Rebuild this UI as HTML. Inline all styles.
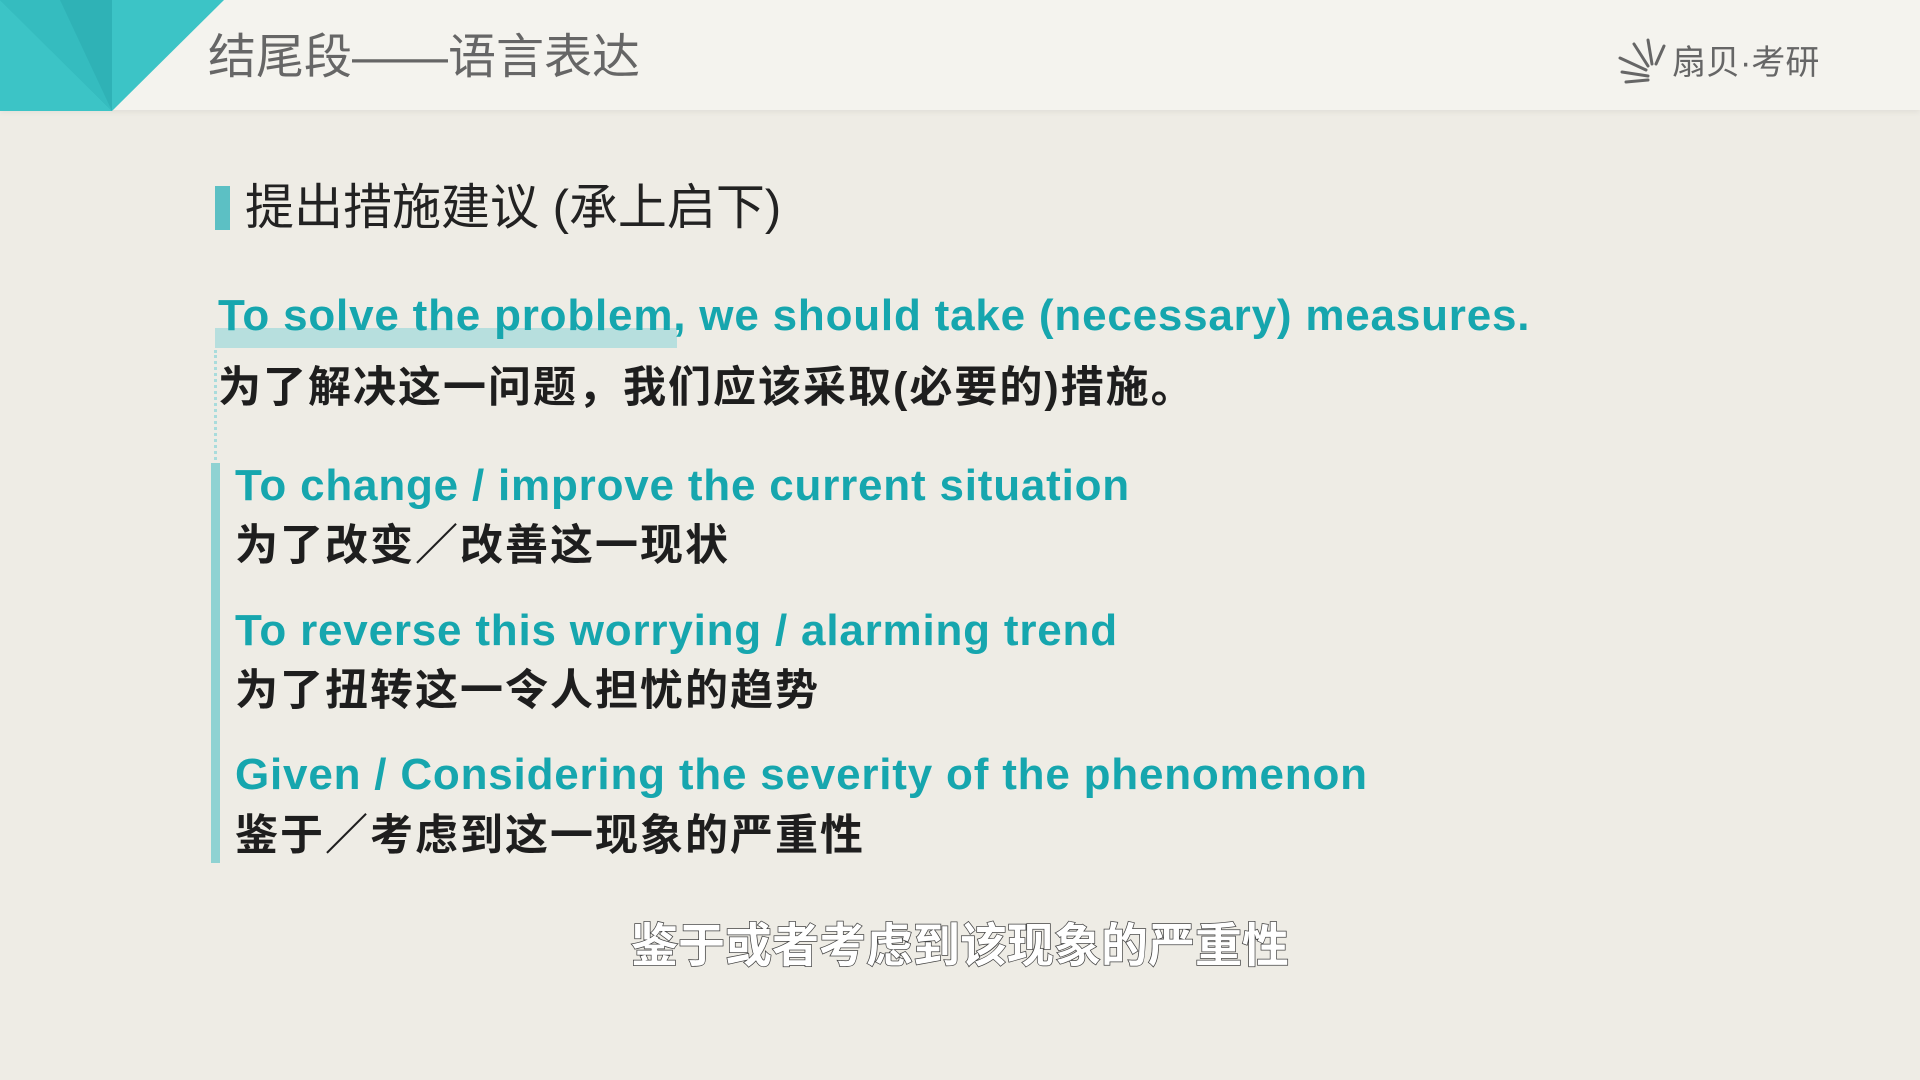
<!DOCTYPE html>
<html><head><meta charset="utf-8"><style>
*{margin:0;padding:0}
body{width:1920px;height:1080px;overflow:hidden;position:relative;background:#eeece5;font-family:"Liberation Sans","Noto Sans CJK SC",sans-serif}
.abs{position:absolute;white-space:nowrap}
.en{color:#16a6ae;font-weight:bold;font-size:44px;letter-spacing:0.8px;line-height:1}
.zh{color:#1e1e1e;font-weight:bold;font-size:43px;letter-spacing:2px;line-height:1}
</style></head><body>
<div class="abs" style="left:0;top:0;width:1920px;height:110px;background:#f4f3ee;box-shadow:0 2px 6px rgba(0,0,0,0.06)"></div>
<svg class="abs" style="left:0;top:0" width="240" height="112">
<polygon points="0,0 224,0 112,111 0,111" fill="#3cc4c6"/>
<polygon points="0,0 112,0 112,111" fill="#2fb2b6"/>
<polygon points="0,0 60,0 112,111" fill="#35bcbf"/>
</svg>
<div class="abs" style="left:208px;top:34px;font-size:48px;color:#666;line-height:1">结尾段——语言表达</div>
<svg class="abs" style="left:1618px;top:38px" width="50" height="46" stroke="#666" stroke-width="3" stroke-linecap="round">
<line x1="2" y1="20" x2="28" y2="32"/><line x1="4" y1="34" x2="30" y2="38"/><line x1="8" y1="44" x2="30" y2="42"/>
<line x1="16" y1="6" x2="30" y2="28"/><line x1="30" y1="2" x2="34" y2="26"/><line x1="46" y1="8" x2="38" y2="26"/>
</svg>
<div class="abs" style="left:1672px;top:46px;font-size:34px;color:#666;line-height:1">扇贝·考研</div>

<div class="abs" style="left:215px;top:186px;width:15px;height:44px;background:#5cc0c4"></div>
<div class="abs" style="left:245px;top:184px;font-size:49px;color:#222;line-height:1">提出措施建议 (承上启下)</div>

<div class="abs" style="left:215px;top:328px;width:462px;height:20px;background:#a9dcdc;opacity:.8"></div>
<div class="abs en" style="left:218px;top:294px">To solve the problem, we should take (necessary) measures.</div>
<div class="abs" style="left:214px;top:350px;height:110px;border-left:3px dotted #a9dcdc"></div>
<div class="abs zh" style="left:218px;top:367px">为了解决这一问题，我们应该采取(必要的)措施。</div>

<div class="abs" style="left:211px;top:463px;width:9px;height:400px;background:#8fd2d2"></div>
<div class="abs en" style="left:235px;top:464px">To change / improve the current situation</div>
<div class="abs zh" style="left:235px;top:525px">为了改变／改善这一现状</div>
<div class="abs en" style="left:235px;top:609px">To reverse this worrying / alarming trend</div>
<div class="abs zh" style="left:235px;top:670px">为了扭转这一令人担忧的趋势</div>
<div class="abs en" style="left:235px;top:753px">Given / Considering the severity of the phenomenon</div>
<div class="abs zh" style="left:235px;top:815px">鉴于／考虑到这一现象的严重性</div>

<div class="abs" style="left:631px;top:922px;font-size:47px;color:#fff;line-height:1;-webkit-text-stroke:1.5px #444;paint-order:stroke fill;font-weight:bold">鉴于或者考虑到该现象的严重性</div>
</body></html>
